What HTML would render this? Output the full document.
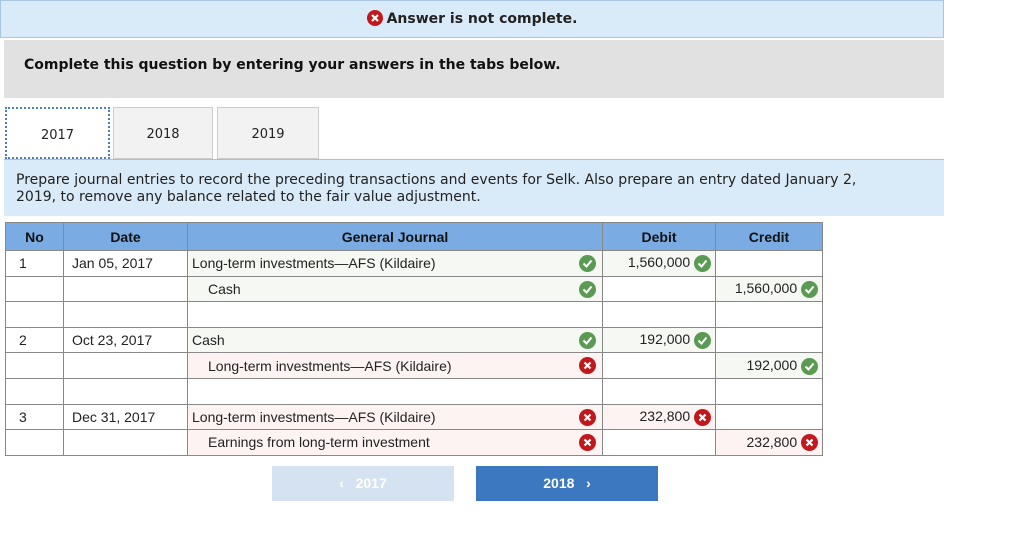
<!DOCTYPE html><html><head><style>
body{margin:0;width:1024px;height:533px;background:#fff;font-family:"Liberation Sans",sans-serif;position:relative;overflow:hidden}
.abs{position:absolute}
.ic{display:inline-block;width:17px;height:17px;border-radius:50%;vertical-align:middle;position:relative}
.ic svg{position:absolute;left:0;top:0}
.g{background:#5b9a53}.r{background:#c1181d}
table{border-collapse:collapse;position:absolute;left:5px;top:222px;font-size:14px;color:#222;table-layout:fixed}
td,th{border:1px solid #888;padding:0 4px;box-sizing:border-box;position:relative;white-space:nowrap}
tr{height:25.6px}
tr.h{height:28px}
th{background:#7aabe3;font-weight:bold;color:#111}
.gr{background:#f5f8f3}.pk{background:#fdf3f2}
.rt{text-align:right}
.fr{position:absolute;right:6px;top:4px}
td:first-child{padding-left:13px}
td:nth-child(2){padding-left:8px}
.tab{position:absolute;top:107px;height:52px;width:100px;box-sizing:border-box;border:1px solid #ccc;background:#f2f2f2;font-family:"DejaVu Sans",sans-serif;font-size:13px;text-align:center;line-height:53px;color:#222}
</style></head><body>
<div class="abs" style="left:0;top:0;width:942px;height:36px;background:#d9eaf8;border:1px solid #a9c7e4;text-align:center;line-height:36px;font-family:'DejaVu Sans',sans-serif;font-weight:bold;font-size:14px;color:#222"><span class="ic r" style="width:16px;height:16px;margin-right:4px;vertical-align:-3px"><svg width="16" height="16"><path d="M5 5L11 11M11 5L5 11" stroke="#fff" stroke-width="2.2"/></svg></span>Answer is not complete.</div>
<div class="abs" style="left:4px;top:40px;width:940px;height:58px;background:#e1e1e1;font-family:'DejaVu Sans',sans-serif;font-weight:bold;font-size:14px;color:#111;line-height:50px;padding-left:20px;box-sizing:border-box">Complete this question by entering your answers in the tabs below.</div>
<div class="tab" style="left:5px;width:105px;background:#fff;border:2px dotted #4a7fc1;line-height:53px">2017</div>
<div class="tab" style="left:113px">2018</div>
<div class="tab" style="left:217px;width:102px">2019</div>
<div class="abs" style="left:4px;top:159px;width:940px;height:57px;background:#d9eaf8;border-top:1px solid #bbb;font-family:'DejaVu Sans',sans-serif;font-size:14px;color:#222;padding:12px 0 0 12px;box-sizing:border-box;line-height:17px">Prepare journal entries to record the preceding transactions and events for Selk. Also prepare an entry dated January 2,<br>2019, to remove any balance related to the fair value adjustment.</div>
<table>
<colgroup><col style="width:58px"><col style="width:124px"><col style="width:415px"><col style="width:113px"><col style="width:107px"></colgroup>
<tr class="h"><th>No</th><th>Date</th><th>General Journal</th><th>Debit</th><th>Credit</th></tr>
<tr><td>1</td><td>Jan 05, 2017</td><td class="gr">Long-term investments—AFS (Kildaire)<span class="ic g fr"><svg width="17" height="17"><path d="M4.5 8.5L7.5 11.5L12.5 5.5" stroke="#fff" stroke-width="2" fill="none"/></svg></span></td><td class="gr rt">1,560,000 <span class="ic g"><svg width="17" height="17"><path d="M4.5 8.5L7.5 11.5L12.5 5.5" stroke="#fff" stroke-width="2" fill="none"/></svg></span></td><td></td></tr>
<tr><td></td><td></td><td class="gr" style="padding-left:20px">Cash<span class="ic g fr"><svg width="17" height="17"><path d="M4.5 8.5L7.5 11.5L12.5 5.5" stroke="#fff" stroke-width="2" fill="none"/></svg></span></td><td></td><td class="gr rt">1,560,000 <span class="ic g"><svg width="17" height="17"><path d="M4.5 8.5L7.5 11.5L12.5 5.5" stroke="#fff" stroke-width="2" fill="none"/></svg></span></td></tr>
<tr><td></td><td></td><td></td><td></td><td></td></tr>
<tr><td>2</td><td>Oct 23, 2017</td><td class="gr">Cash<span class="ic g fr"><svg width="17" height="17"><path d="M4.5 8.5L7.5 11.5L12.5 5.5" stroke="#fff" stroke-width="2" fill="none"/></svg></span></td><td class="gr rt">192,000 <span class="ic g"><svg width="17" height="17"><path d="M4.5 8.5L7.5 11.5L12.5 5.5" stroke="#fff" stroke-width="2" fill="none"/></svg></span></td><td></td></tr>
<tr><td></td><td></td><td class="pk" style="padding-left:20px">Long-term investments—AFS (Kildaire)<span class="ic r fr"><svg width="17" height="17"><path d="M5.5 5.5L11.5 11.5M11.5 5.5L5.5 11.5" stroke="#fff" stroke-width="2.2"/></svg></span></td><td></td><td class="gr rt">192,000 <span class="ic g"><svg width="17" height="17"><path d="M4.5 8.5L7.5 11.5L12.5 5.5" stroke="#fff" stroke-width="2" fill="none"/></svg></span></td></tr>
<tr><td></td><td></td><td></td><td></td><td></td></tr>
<tr><td>3</td><td>Dec 31, 2017</td><td class="pk">Long-term investments—AFS (Kildaire)<span class="ic r fr"><svg width="17" height="17"><path d="M5.5 5.5L11.5 11.5M11.5 5.5L5.5 11.5" stroke="#fff" stroke-width="2.2"/></svg></span></td><td class="pk rt">232,800 <span class="ic r"><svg width="17" height="17"><path d="M5.5 5.5L11.5 11.5M11.5 5.5L5.5 11.5" stroke="#fff" stroke-width="2.2"/></svg></span></td><td></td></tr>
<tr><td></td><td></td><td class="pk" style="padding-left:20px">Earnings from long-term investment<span class="ic r fr"><svg width="17" height="17"><path d="M5.5 5.5L11.5 11.5M11.5 5.5L5.5 11.5" stroke="#fff" stroke-width="2.2"/></svg></span></td><td></td><td class="pk rt">232,800 <span class="ic r"><svg width="17" height="17"><path d="M5.5 5.5L11.5 11.5M11.5 5.5L5.5 11.5" stroke="#fff" stroke-width="2.2"/></svg></span></td></tr>
</table>
<div class="abs" style="left:272px;top:466px;width:182px;height:35px;background:#d4e2f1;color:#fff;font-weight:bold;font-size:14px;text-align:center;line-height:35px">&lsaquo;&nbsp;&nbsp;&nbsp;2017</div>
<div class="abs" style="left:476px;top:466px;width:182px;height:35px;background:#3c78c0;color:#fff;font-weight:bold;font-size:14px;text-align:center;line-height:35px">2018&nbsp;&nbsp;&nbsp;&rsaquo;</div>
</body></html>
